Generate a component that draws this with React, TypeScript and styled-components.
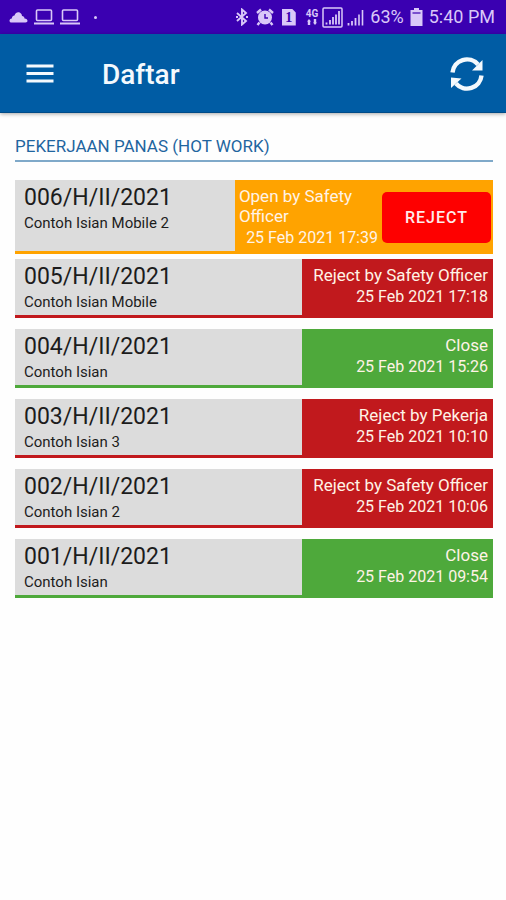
import React from "react";
import styled, { createGlobalStyle } from "styled-components";

type Tone = "open" | "rejected" | "closed";

interface Permit {
  code: string;
  title: string;
  status: string;
  date: string;
  tone: Tone;
  canReject?: boolean;
}

const toneColor: Record<Tone, string> = {
  open: "#ffa300",
  rejected: "#c1191d",
  closed: "#4ea93b",
};

const permits: Permit[] = [
  { code: "006/H/II/2021", title: "Contoh Isian Mobile 2", status: "Open by Safety Officer", date: "25 Feb 2021 17:39", tone: "open", canReject: true },
  { code: "005/H/II/2021", title: "Contoh Isian Mobile", status: "Reject by Safety Officer", date: "25 Feb 2021 17:18", tone: "rejected" },
  { code: "004/H/II/2021", title: "Contoh Isian", status: "Close", date: "25 Feb 2021 15:26", tone: "closed" },
  { code: "003/H/II/2021", title: "Contoh Isian 3", status: "Reject by Pekerja", date: "25 Feb 2021 10:10", tone: "rejected" },
  { code: "002/H/II/2021", title: "Contoh Isian 2", status: "Reject by Safety Officer", date: "25 Feb 2021 10:06", tone: "rejected" },
  { code: "001/H/II/2021", title: "Contoh Isian", status: "Close", date: "25 Feb 2021 09:54", tone: "closed" },
];

const GlobalStyle = createGlobalStyle`
  * { box-sizing: border-box; }
  body {
    margin: 0;
    background: #fefefe;
    font-family: Roboto, "Liberation Sans", sans-serif;
  }
`;

const StatusBar = styled.div`
  display: flex;
  align-items: center;
  justify-content: space-between;
  height: 34px;
  padding: 0 11px 0 9px;
  background: #3a00b1;
  color: #d9c8f8;
  font-size: 18px;
  line-height: 24px;
`;

const StatusGroup = styled.div<{ $gap: number }>`
  display: flex;
  align-items: center;
  gap: ${({ $gap }) => $gap}px;
  white-space: nowrap;
`;

const Dot = styled.span`
  width: 3px;
  height: 3px;
  margin-left: 8px;
  border-radius: 50%;
  background: currentColor;
`;

const AppBar = styled.header`
  display: flex;
  align-items: center;
  height: 79px;
  padding: 2px 21px 0 24px;
  background: #005ca4;
  border-bottom: 1px solid #004b88;
  box-shadow: 0 1px 4px rgba(0, 0, 0, 0.35);
  color: #f4f9fd;
`;

const AppTitle = styled.h1`
  flex: 1;
  margin: 0 0 0 46px;
  padding-top: 2px;
  font-size: 28px;
  line-height: 32px;
  font-weight: 500;
`;

const IconButton = styled.button`
  display: flex;
  padding: 0;
  border: 0;
  background: none;
  color: inherit;
  cursor: pointer;
`;

const Content = styled.main`
  padding: 22px 13px 24px 15px;
`;

const SectionTitle = styled.h2`
  margin: 0 0 18px;
  padding-bottom: 3px;
  border-bottom: 2px solid #7fa9c9;
  color: #1f659f;
  font-size: 17px;
  line-height: 22px;
  font-weight: 400;
`;

const PermitList = styled.ul`
  margin: 0;
  padding: 0;
  list-style: none;
`;

const PermitRow = styled.li<{ $tone: Tone; $tall?: boolean }>`
  display: grid;
  grid-template-columns: ${({ $tall }) => ($tall ? "46% 54%" : "60% 40%")};
  min-height: ${({ $tall }) => ($tall ? 74 : 59)}px;
  margin-bottom: ${({ $tall }) => ($tall ? 5 : 11)}px;
  border-bottom: 3px solid ${({ $tone }) => toneColor[$tone]};
`;

const PermitInfo = styled.div`
  padding: 4px 10px 2px 9px;
  background: #dcdcdc;
  color: #1c1c1c;
`;

const PermitCode = styled.div`
  font-size: 23px;
  line-height: 28px;
`;

const PermitTitle = styled.div`
  font-size: 15px;
  line-height: 22px;
`;

const PermitState = styled.div<{ $tone: Tone }>`
  display: flex;
  align-items: flex-start;
  gap: 4px;
  padding: 6px 5px 0 4px;
  background: ${({ $tone }) => toneColor[$tone]};
  color: #fff3e6;
`;

const StateText = styled.div`
  flex: 1;
  text-align: right;
`;

const StateName = styled.div<{ $start?: boolean }>`
  font-size: 17px;
  line-height: 20px;
  text-align: ${({ $start }) => ($start ? "left" : "right")};
`;

const StateDate = styled.time`
  display: block;
  font-size: 16px;
  line-height: 24px;
  white-space: nowrap;
`;

const RejectButton = styled.button`
  flex: none;
  width: 109px;
  height: 51px;
  margin: 6px -3px 0 0;
  padding: 0;
  border: 0;
  border-radius: 5px;
  background: #fe0000;
  color: #ffeaea;
  font-family: inherit;
  font-size: 16px;
  font-weight: 500;
  letter-spacing: 1px;
  cursor: pointer;
`;

const CloudIcon = () => (
  <svg width="19" height="12" viewBox="0 0 19 12" fill="currentColor" aria-hidden="true">
    <path d="M2.500 11.500C-.2 11.500-.2 7.800 2.800 7.500 3 5.500 4 4.500 5.500 4.500 6.500 1.500 9 .8 11 1.800 12.500 2.500 13 4 13 5 14.500 5 15.500 6 15.500 7.500 19 7.500 19.500 11.500 16.500 11.500Z" />
  </svg>
);

const LaptopIcon = () => (
  <svg width="20" height="16" viewBox="0 0 20 16" fill="none" stroke="currentColor" aria-hidden="true">
    <rect x="2.500" y="1" width="15" height="10.500" rx="1" strokeWidth="1.600" />
    <path d="M0 14.500H20" strokeWidth="2" />
  </svg>
);

const BluetoothIcon = () => (
  <svg width="12" height="18" viewBox="0 0 12 18" fill="none" stroke="currentColor" strokeWidth="1.900" aria-hidden="true">
    <path d="M1 5 10 13 6 16.500V1.500L10 5 1 13" />
    <path d="M0 9H2M10 9H12" />
  </svg>
);

const AlarmIcon = () => (
  <svg width="18" height="18" viewBox="0 0 18 18" fill="none" stroke="currentColor" aria-hidden="true">
    <circle cx="9" cy="9.500" r="7" fill="currentColor" stroke="none" />
    <path d="M1 5 5 1.500M17 5 13 1.500M3.500 14.500 1.500 17M14.500 14.500 16.500 17" strokeWidth="2.400" />
    <path d="M9 6V10H12" stroke="#3a00b1" strokeWidth="1.400" />
  </svg>
);

const SimBadge = styled.span`
  display: flex;
  align-items: center;
  justify-content: center;
  width: 14px;
  height: 17px;
  background: currentColor;
  clip-path: polygon(0 0, 72% 0, 100% 24%, 100% 100%, 0 100%);
`;

const SimNumber = styled.b`
  color: #3a00b1;
  font-family: "Liberation Serif", serif;
  font-size: 14px;
  line-height: 17px;
`;

const NetworkType = styled.span`
  display: flex;
  flex-direction: column;
  align-items: center;
  margin-left: 4px;
  font-size: 10px;
  font-weight: 700;
  line-height: 10px;
`;

const DataArrows = () => (
  <svg width="10" height="6" viewBox="0 0 10 6" fill="currentColor" aria-hidden="true">
    <path d="M0 2.500 2 0 4 2.500H3.200V6H.8V2.500ZM6 3.500H6.800V0H9.200V3.500H10L8 6Z" />
  </svg>
);

const SignalIcon = ({ framed }: { framed?: boolean }) =>
  framed ? (
    <svg width="21" height="21" viewBox="0 0 21 21" fill="none" stroke="currentColor" aria-hidden="true">
      <rect x="1" y="1" width="19" height="19" rx="1" strokeWidth="1.500" />
      <path d="M4.500 15.500V17.500M8 13V17.500M11 10V17.500M14 7.500V17.500M17 4V17.500" strokeWidth="1.800" />
    </svg>
  ) : (
    <svg width="17" height="17" viewBox="0 0 17 17" fill="none" stroke="currentColor" aria-hidden="true">
      <path d="M1.500 14V16.500M5 12V16.500M8.500 9V16.500" strokeWidth="1.800" />
      <path d="M12 5.500V16.500M15.500 1V16.500" strokeWidth="1.600" />
    </svg>
  );

const BatteryIcon = () => (
  <svg width="13" height="18" viewBox="0 0 13 18" fill="currentColor" aria-hidden="true">
    <path d="M4 0H9V2H12.500V18H.5V2H4Z" />
    <path d="M2.500 4H10.500V6H2.500Z" fill="#3a00b1" fillOpacity=".6" />
  </svg>
);

const MenuIcon = () => (
  <svg width="32" height="22" viewBox="0 0 32 22" stroke="currentColor" strokeWidth="3.200" aria-hidden="true">
    <path d="M2.500 3H29.500M2.500 10.500H29.500M2.500 18H29.500" />
  </svg>
);

const RefreshIcon = () => (
  <svg width="36" height="36" viewBox="0 0 36 36" aria-hidden="true">
    <path d="M3.500 16.500A14.500 14.500 0 0 1 29 8.500" fill="none" stroke="currentColor" strokeWidth="4.400" />
    <path d="M33.500 4V14.500H23Z" fill="currentColor" />
    <path d="M32.500 19.500A14.500 14.500 0 0 1 7 27.500" fill="none" stroke="currentColor" strokeWidth="4.400" />
    <path d="M2 32V21.500L12.500 22.500Z" fill="currentColor" />
  </svg>
);

export default function App() {
  return (
    <>
      <GlobalStyle />
      <StatusBar>
        <StatusGroup $gap={6}>
          <CloudIcon />
          <LaptopIcon />
          <LaptopIcon />
          <Dot />
        </StatusGroup>
        <StatusGroup $gap={6}>
          <StatusGroup $gap={8}>
            <BluetoothIcon />
            <AlarmIcon />
            <SimBadge>
              <SimNumber>1</SimNumber>
            </SimBadge>
          </StatusGroup>
          <StatusGroup $gap={4}>
            <NetworkType>
              4G
              <DataArrows />
            </NetworkType>
            <SignalIcon framed />
            <SignalIcon />
          </StatusGroup>
          <span>63%</span>
          <BatteryIcon />
          <span>5:40 PM</span>
        </StatusGroup>
      </StatusBar>
      <AppBar>
        <IconButton type="button" aria-label="Menu">
          <MenuIcon />
        </IconButton>
        <AppTitle>Daftar</AppTitle>
        <IconButton type="button" aria-label="Refresh">
          <RefreshIcon />
        </IconButton>
      </AppBar>
      <Content>
        <SectionTitle>PEKERJAAN PANAS (HOT WORK)</SectionTitle>
        <PermitList>
          {permits.map((permit) => (
            <PermitRow key={permit.code} $tone={permit.tone} $tall={permit.canReject}>
              <PermitInfo>
                <PermitCode>{permit.code}</PermitCode>
                <PermitTitle>{permit.title}</PermitTitle>
              </PermitInfo>
              <PermitState $tone={permit.tone}>
                <StateText>
                  <StateName $start={permit.canReject}>{permit.status}</StateName>
                  <StateDate>{permit.date}</StateDate>
                </StateText>
                {permit.canReject && <RejectButton type="button">REJECT</RejectButton>}
              </PermitState>
            </PermitRow>
          ))}
        </PermitList>
      </Content>
    </>
  );
}
